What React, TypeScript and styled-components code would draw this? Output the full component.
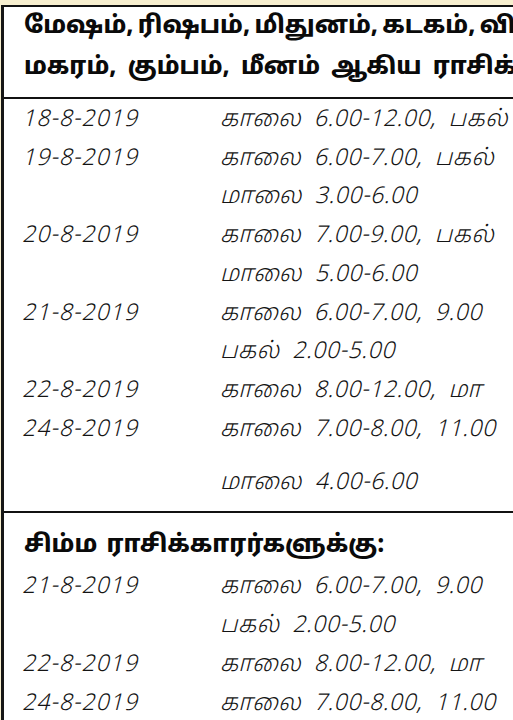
import React from 'react';
import styled, { createGlobalStyle } from 'styled-components';

const GlobalStyle = createGlobalStyle`
  html, body {
    margin: 0;
    padding: 0;
    background: #ffffff;
  }
`;

const Page = styled.div`
  width: 513px;
  height: 720px;
  overflow: hidden;
  background: #f7efcf;
  padding-top: 5px;
  box-sizing: border-box;
`;

const Frame = styled.div`
  background: #ffffff;
  border-top: 2px solid #111;
  border-left: 3px solid #161616;
  margin-left: 1px;
  height: 100%;
  box-sizing: border-box;
`;

const Heading = styled.div<{ pad: string }>`
  padding: ${(props) => props.pad};
  font-family: 'Noto Sans Tamil', 'Noto Sans', 'DejaVu Sans', sans-serif;
  font-weight: 800;
  font-size: 24px;
  line-height: 41px;
  color: #0a0a0a;
  white-space: nowrap;
`;

const HeadLine = styled.div<{ spacing: number }>`
  word-spacing: ${(props) => props.spacing}px;
`;

const Divider = styled.div`
  border-top: 2px solid #111;
`;

const Rows = styled.div<{ top: number; bottom: number }>`
  padding: ${(props) => `${props.top}px 0 ${props.bottom}px 18px`};
`;

const Row = styled.div<{ extra?: number }>`
  display: grid;
  grid-template-columns: 198px 1fr;
  height: 38.75px;
  align-items: center;
  margin-top: ${(props) => props.extra || 0}px;
  font-family: 'Noto Sans Tamil', 'Noto Sans', 'DejaVu Sans', sans-serif;
  font-style: italic;
  font-weight: 300;
  font-size: 23px;
  color: #141414;
  white-space: nowrap;
`;

const DateCell = styled.span`
  letter-spacing: 1px;
`;

const TimeCell = styled.span`
  letter-spacing: 0.6px;
  word-spacing: 6px;
`;

type Entry = { date?: string; time: string; extra?: number };

const firstGroup: Entry[] = [
  { date: '18-8-2019', time: 'காலை 6.00-12.00, பகல்' },
  { date: '19-8-2019', time: 'காலை 6.00-7.00, பகல்' },
  { time: 'மாலை 3.00-6.00' },
  { date: '20-8-2019', time: 'காலை 7.00-9.00, பகல்' },
  { time: 'மாலை 5.00-6.00' },
  { date: '21-8-2019', time: 'காலை 6.00-7.00, 9.00' },
  { time: 'பகல் 2.00-5.00' },
  { date: '22-8-2019', time: 'காலை 8.00-12.00, மா' },
  { date: '24-8-2019', time: 'காலை 7.00-8.00, 11.00' },
  { time: 'மாலை 4.00-6.00', extra: 14 },
];

const simhaGroup: Entry[] = [
  { date: '21-8-2019', time: 'காலை 6.00-7.00, 9.00' },
  { time: 'பகல் 2.00-5.00' },
  { date: '22-8-2019', time: 'காலை 8.00-12.00, மா' },
  { date: '24-8-2019', time: 'காலை 7.00-8.00, 11.00' },
];

const List = ({ items }: { items: Entry[] }) => (
  <>
    {items.map((item, i) => (
      <Row key={i} extra={item.extra}>
        <DateCell>{item.date || ''}</DateCell>
        <TimeCell>{item.time}</TimeCell>
      </Row>
    ))}
  </>
);

const App = () => {
  return (
    <>
      <GlobalStyle />
      <Page>
        <Frame>
          <Heading pad='0 0 8px 20px'>
            <HeadLine spacing={-2}>மேஷம், ரிஷபம், மிதுனம், கடகம், வி</HeadLine>
            <HeadLine spacing={5}>மகரம், கும்பம், மீனம் ஆகிய ராசிக்</HeadLine>
          </Heading>
          <Divider />
          <Rows top={2} bottom={8}>
            <List items={firstGroup} />
          </Rows>
          <Divider />
          <Heading pad='13px 0 0 20px'>
            <HeadLine spacing={3}>சிம்ம ராசிக்காரர்களுக்கு:</HeadLine>
          </Heading>
          <Rows top={2} bottom={0}>
            <List items={simhaGroup} />
          </Rows>
        </Frame>
      </Page>
    </>
  );
};

export default App;
